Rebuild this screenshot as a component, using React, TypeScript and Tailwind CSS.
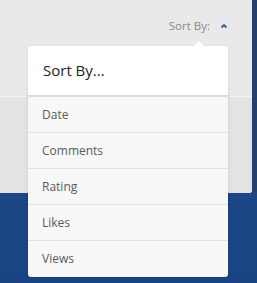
import React from "react";

const items = ["Date", "Comments", "Rating", "Likes", "Views"];

export default function App() {
  return (
    <div
      className="relative w-[257px] h-[283px] overflow-hidden bg-gradient-to-b from-[#1d4888] to-[#1a4584]"
      style={{ fontFamily: '"Open Sans", "Liberation Sans", sans-serif' }}
    >
      <div className="flex h-[193px]">
        <div className="w-[252px] h-full bg-[#e9e9e9] rounded-br-[3px] flex flex-col overflow-hidden">
          <div className="h-[96px] flex justify-end items-start pt-[17px] pr-[23px] gap-[9px]">
            <span className="text-[11.5px] leading-[18px] text-[#8a8a8a]">Sort By:</span>
            <svg width="10" height="18" viewBox="0 0 10 18">
              <path d="M2.5 10.5 L5 8 L7.5 10.5" fill="none" stroke="#2f5aa8" strokeWidth="1.8" />
            </svg>
          </div>
          <div className="flex-1 border-t border-[#f3f3f3] bg-[#e3e3e3]" />
        </div>
        <div className="w-[5px] h-full bg-[#21416f]" />
      </div>

      <div className="absolute left-[28px] top-[46px] w-[200px] rounded-[3px] bg-[#f8f8f8] shadow-[0_1px_3px_rgba(0,0,0,0.15)]">
        <div className="absolute -top-[5px] left-[165px] w-0 h-0 border-l-[6px] border-r-[6px] border-b-[6px] border-l-transparent border-r-transparent border-b-white" />
        <div className="h-[51px] bg-white rounded-t-[3px] border-b-2 border-[#dcdcdc] flex items-center pl-[15px]">
          <span className="text-[15px] text-[#222] font-normal">Sort By...</span>
        </div>
        {items.map((it, i) => (
          <div
            key={it}
            className={`h-[36px] flex items-center pl-[14px] text-[12px] text-[#5a5a5a] ${
              i < items.length - 1 ? "border-b border-[#e2e2e2]" : ""
            }`}
          >
            {it}
          </div>
        ))}
      </div>
    </div>
  );
}
